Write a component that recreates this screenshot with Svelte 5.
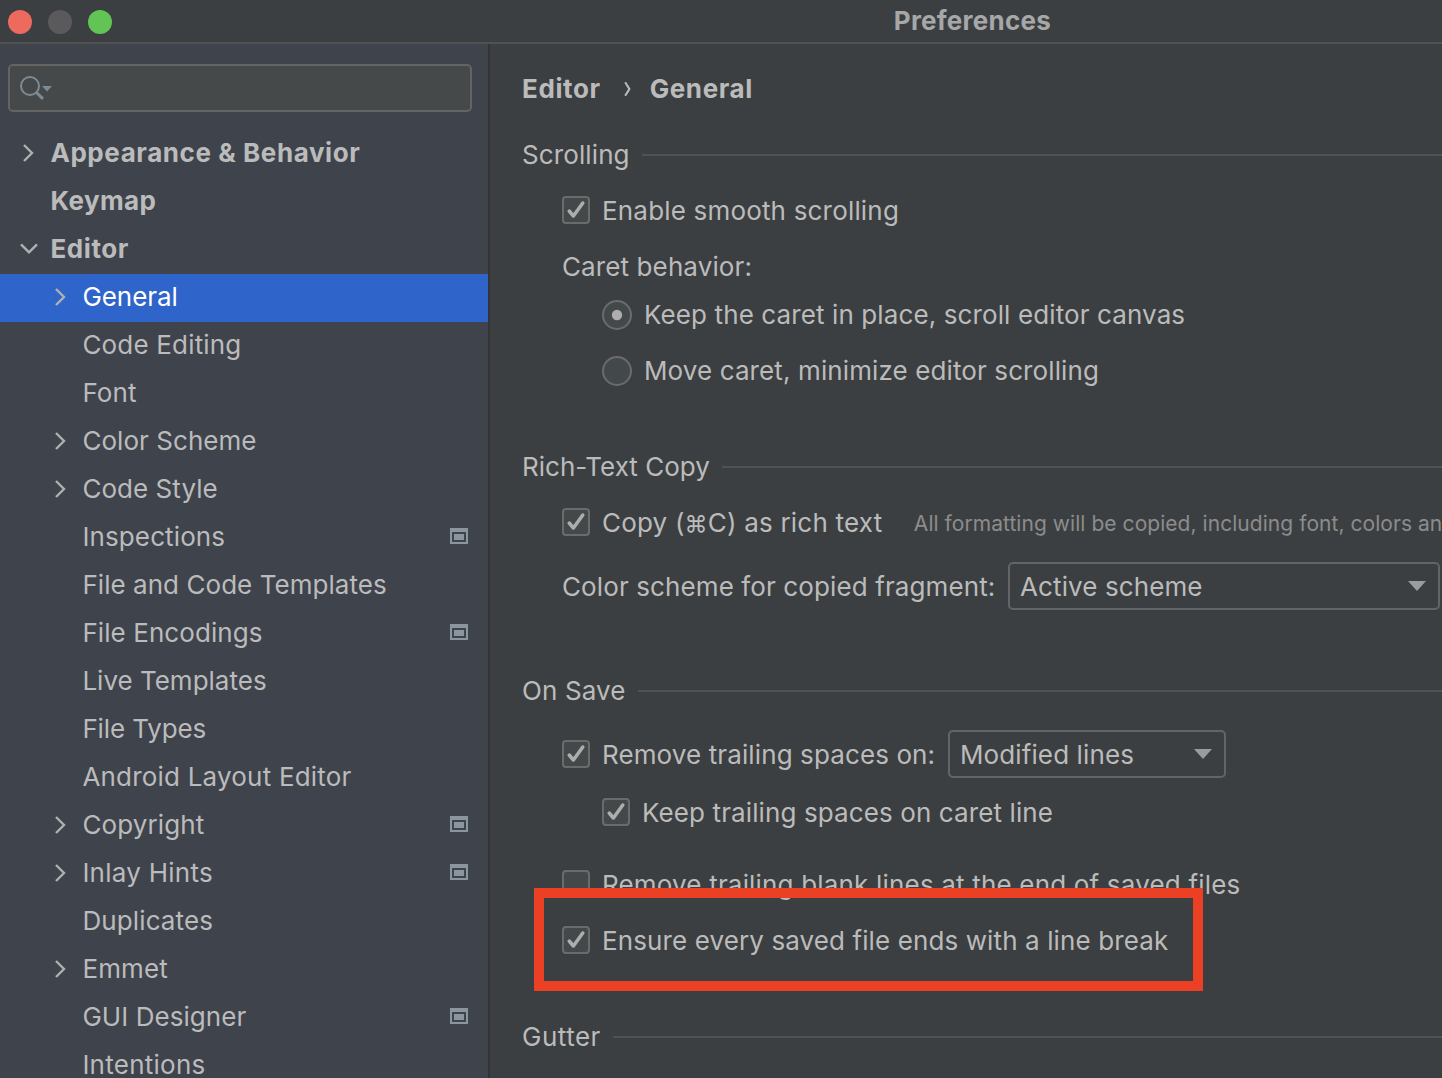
<script>
  const tree = [
    { label: 'Appearance & Behavior', top: true, arrow: 'right', ls: 0.58 },
    { label: 'Keymap', top: true, ls: 0.4 },
    { label: 'Editor', top: true, arrow: 'down', ls: 0.6 },
    { label: 'General', arrow: 'right', selected: true, ls: -0.05 },
    { label: 'Code Editing', ls: 0.18 },
    { label: 'Font' },
    { label: 'Color Scheme', arrow: 'right', ls: 0.05 },
    { label: 'Code Style', arrow: 'right', ls: 0.05 },
    { label: 'Inspections', project: true },
    { label: 'File and Code Templates', ls: 0.05 },
    { label: 'File Encodings', project: true, ls: 0.08 },
    { label: 'Live Templates', ls: 0 },
    { label: 'File Types', ls: -0.12 },
    { label: 'Android Layout Editor', ls: 0.2 },
    { label: 'Copyright', arrow: 'right', project: true },
    { label: 'Inlay Hints', arrow: 'right', project: true, ls: 0.25 },
    { label: 'Duplicates' },
    { label: 'Emmet', arrow: 'right' },
    { label: 'GUI Designer', project: true, ls: 0.06 },
    { label: 'Intentions', ls: 0.25 },
  ];
</script>

{#snippet box(checked)}
  <svg class="box" width="28" height="28" viewBox="0 0 28 28">
    <rect x="1" y="1" width="26" height="26" rx="3" fill="#43494a" stroke="#6b6b6b" stroke-width="2" />
    {#if checked}
      <path d="M7.2 15 L11.4 20 L20.8 7" fill="none" stroke="#adadad" stroke-width="3.5" stroke-linecap="round" stroke-linejoin="round" />
    {/if}
  </svg>
{/snippet}

{#snippet radio(checked)}
  <svg class="radio" width="30" height="30" viewBox="0 0 30 30">
    <circle cx="15" cy="15" r="14" fill="#43494a" stroke="#6b6b6b" stroke-width="2" />
    {#if checked}<circle cx="15" cy="15" r="5.2" fill="#adadad" />{/if}
  </svg>
{/snippet}

{#snippet combo(text, size)}
  <div class="combo {size}">
    <span class="text">{text}</span>
    <svg width="18" height="10" viewBox="0 0 18 10"><path d="M0 0H18L9 10Z" fill="#9a9da0" /></svg>
  </div>
{/snippet}

<div class="window">
  <header>
    <i class="light red"></i><i class="light gray"></i><i class="light green"></i>
    <h1>Preferences</h1>
  </header>
  <div class="body">
    <aside>
      <div class="search">
        <svg width="34" height="26" viewBox="0 0 34 26">
          <circle cx="11" cy="11" r="9" fill="none" stroke="#7d8b94" stroke-width="2" />
          <path d="M17.5 17.5L24 23.8" stroke="#7d8b94" stroke-width="3" />
          <path d="M23 11H33L28 16.5Z" fill="#7d8b94" />
        </svg>
      </div>
      <ul>
        {#each tree as item}
          <li class:top={item.top} class:selected={item.selected}>
            <span class="arrow">
              {#if item.arrow === 'right'}
                <svg width="12" height="18" viewBox="0 0 12 18"><path d="M1 1L9 9L1 17" /></svg>
              {:else if item.arrow === 'down'}
                <svg width="18" height="12" viewBox="0 0 18 12"><path d="M1 1.4L9 9.4L17 1.4" /></svg>
              {/if}
            </span>
            <span class="label" style:letter-spacing="{item.ls ?? 0.12}px">{item.label}</span>
            {#if item.project}
              <svg class="project" width="18" height="16" viewBox="0 0 18 16">
                <path fill="#8a959f" fill-rule="evenodd" d="M0 0H18V16H0ZM2 4V14H16V4ZM4 6H14V12H4Z" />
              </svg>
            {/if}
          </li>
        {/each}
      </ul>
    </aside>
    <main>
      <div class="row crumbs">
        <b>Editor</b>
        <svg width="8" height="16" viewBox="0 0 8 16"><path d="M1.2 1.2L5.4 8L1.2 14.8" fill="none" stroke="#bbbbbb" stroke-width="2.1" /></svg>
        <b>General</b>
      </div>

      <div class="row section first"><span>Scrolling</span></div>
      <div class="row check">{@render box(true)}<span class="text">Enable smooth scrolling</span></div>
      <div class="row caret">Caret behavior:</div>
      <div class="row option keep">{@render radio(true)}<span>Keep the caret in place, scroll editor canvas</span></div>
      <div class="row option move">{@render radio(false)}<span>Move caret, minimize editor scrolling</span></div>

      <div class="row section rich"><span>Rich-Text Copy</span></div>
      <div class="row check">
        {@render box(true)}<span class="text wide">Copy (<span class="cmd">⌘</span>C) as rich text</span>
        <small>All formatting will be copied, including font, colors and style</small>
      </div>
      <div class="row scheme"><span class="text">Color scheme for copied fragment:</span>{@render combo('Active scheme', 'large')}</div>

      <div class="row section save"><span>On Save</span></div>
      <div class="row trailing">{@render box(true)}<span class="text">Remove trailing spaces on:</span>{@render combo('Modified lines', 'small')}</div>
      <div class="row nested">{@render box(true)}<span class="text">Keep trailing spaces on caret line</span></div>
      <div class="row blank">{@render box(false)}<span class="text">Remove trailing blank lines at the end of saved files</span></div>
      <div class="row ensure">{@render box(true)}<span class="text">Ensure every saved file ends with a line break</span><div class="highlight"></div></div>

      <div class="row section gutter"><span>Gutter</span></div>
    </main>
  </div>
</div>

<style>
  :global(body) { background: #3c3f41; overflow: hidden; }
  .window {
    width: 1442px; height: 1078px; overflow: hidden;
    display: flex; flex-direction: column;
    background: #3c3f41; color: #bbbbbb;
    font: 400 26px/32px Inter, sans-serif; letter-spacing: 0.11px; white-space: nowrap;
  }
  svg { display: block; flex: none; }
  header {
    flex: none; box-sizing: border-box; height: 44px; padding: 0 0 0 8px;
    display: flex; align-items: center; gap: 16px;
    border-bottom: 2px solid #515151;
  }
  .light { width: 24px; height: 24px; border-radius: 50%; margin-top: 2px; }
  .red { background: #ed6a5e; }
  .gray { background: #5a5a5c; }
  .green { background: #61c454; }
  h1 {
    margin: 0 0 0 765.8px; font-size: 26px; line-height: 32px; font-weight: 700;
    letter-spacing: 0.25px; color: #a6a7a8;
  }
  .body { flex: 1; min-height: 0; display: flex; }
  aside {
    flex: none; box-sizing: border-box; width: 490px; padding-top: 20px;
    background: #3f434c; border-right: 2px solid #323435; overflow: hidden;
  }
  .search {
    box-sizing: border-box; width: 464px; height: 48px; margin-left: 8px; padding: 9px 0 0 9px;
    border: 2px solid #646464; border-radius: 5px; background: #45494a;
  }
  ul { list-style: none; margin: 18px 0 0; padding: 0; }
  li {
    box-sizing: border-box; height: 48px; padding: 0 20px 2px 40px;
    display: flex; align-items: center;
  }
  li.top { padding-left: 8px; font-weight: 700; }
  li.selected { background: #2f65ca; color: #fff; }
  .arrow { width: 42px; display: flex; justify-content: center; }
  .arrow path { fill: none; stroke: #b0b0b0; stroke-width: 2.4; }
  .label { flex: 1; margin-left: 0.4px; }
  .project { margin-bottom: 2px; }
  main { flex: 1; min-width: 0; padding: 29px 0 0 32px; overflow: hidden; }
  .row { height: 32px; display: flex; align-items: center; }
  b { font-weight: 700; letter-spacing: 0.6px; }
  .crumbs svg { margin: 0 17.5px 0 23.5px; }
  .section::after { content: ''; flex: 1; height: 2px; margin-left: 12px; background: #515151; }
  .first { margin-top: 34px; }
  .check { margin-top: 23px; padding-left: 40px; }
  .box { margin-right: 12px; }
  .text { padding-top: 2px; }
  .check .text, .blank .text { letter-spacing: 0.18px; }
  .check .wide { letter-spacing: 0.2px; }
  .cmd { font-size: 23px; }
  small { margin-left: 31.5px; padding-top: 4px; font-size: 21px; letter-spacing: 0.05px; color: #8c8c8c; }
  .caret { margin-top: 25px; padding-left: 40px; }
  .option { padding-left: 80px; }
  .radio { margin-right: 12px; }
  .keep { margin-top: 16px; }
  .move { margin-top: 24px; }
  .rich { margin-top: 64px; letter-spacing: 0; }
  .scheme { height: 48px; margin-top: 24px; padding-left: 40px; }
  .scheme > .text { width: 446px; }
  .combo {
    box-sizing: border-box; flex: none; height: 48px; padding: 0 12px 0 10px;
    display: flex; align-items: center; justify-content: space-between;
    border: 2px solid #646464; border-radius: 5px;
  }
  .large { width: 432px; }
  .small { width: 278px; }
  .save { margin-top: 65px; }
  .trailing { height: 48px; margin-top: 23px; padding-left: 40px; }
  .trailing > .text { width: 346px; }
  .nested { margin-top: 18px; padding-left: 80px; }
  .blank { margin-top: 40px; padding-left: 40px; }
  .ensure { position: relative; margin-top: 24px; padding-left: 40px; }
  .highlight {
    position: absolute; left: 12px; top: -36px; box-sizing: border-box;
    width: 669px; height: 103px; border: 10px solid #ec4025;
  }
  .gutter { margin-top: 65px; letter-spacing: 0.5px; }
</style>
